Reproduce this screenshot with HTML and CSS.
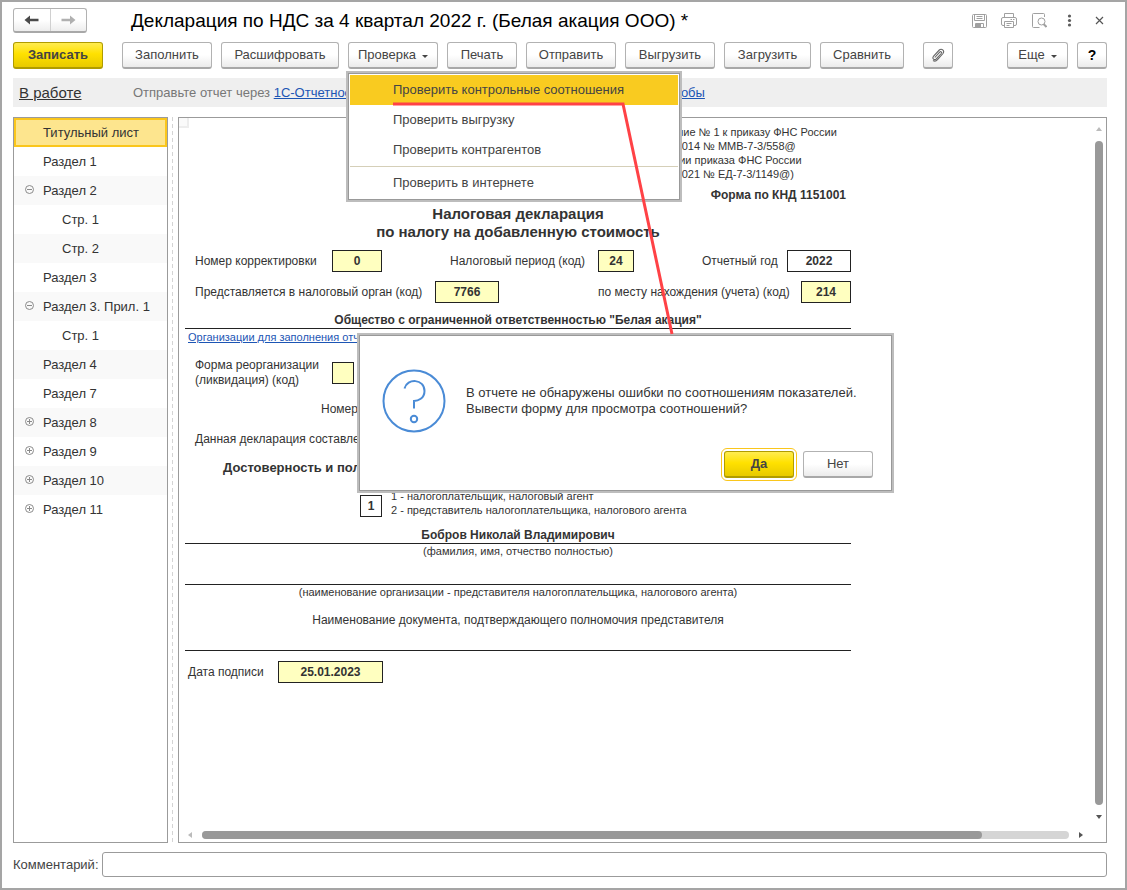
FILE: index.html
```html
<!DOCTYPE html>
<html lang="ru">
<head>
<meta charset="utf-8">
<title>Декларация по НДС</title>
<link rel="stylesheet" href="styles.css">
</head>
<body>
<div class="window">
  <header class="titlebar">
    <div class="history">
      <button class="history-btn" aria-label="Назад"><svg width="16" height="12" viewBox="0 0 16 12"><path d="M0.500 6L6 1.500V4.800H14.500V7.200H6V10.500Z" fill="#4a4a4a"/></svg></button>
      <button class="history-btn" aria-label="Вперед"><svg width="16" height="12" viewBox="0 0 16 12"><path d="M15.500 6L10 1.500V4.800H1.500V7.200H10V10.500Z" fill="#b0b0b0"/></svg></button>
    </div>
    <h1 class="title">Декларация по НДС за 4 квартал 2022 г. (Белая акация ООО) *</h1>
    <div class="window-tools">
      <button class="tool" aria-label="Сохранить"><svg width="16" height="16" viewBox="0 0 16 16" fill="none" stroke="#a0a0a0"><rect x="1.500" y="1.500" width="14" height="13" rx="1"/><path d="M3.500 1.500V7.500H13.500V1.500M5.500 3.500H11.500M5.500 5.500H11.500M4.500 14.500V10.500H12.500V14.500"/><path d="M5 11h5v3h-5z" fill="#a0a0a0" stroke="none"/></svg></button>
      <button class="tool" aria-label="Печать"><svg width="16" height="16" viewBox="0 0 16 16" fill="none" stroke="#a0a0a0"><path d="M3.500 4.500V0.500H12.500V4.500M3.500 12.500H2Q0.500 12.500 0.500 11V6Q0.500 4.500 2 4.500H14Q15.500 4.500 15.500 6V11Q15.500 12.500 14 12.500H12.500M3.500 8.500H12.500V14.500H3.500ZM5.500 10.500H10.500M5.500 12.500H8.500M9.500 6.500H11M12 6.500H13.500"/></svg></button>
      <button class="tool" aria-label="Предварительный просмотр"><svg width="16" height="16" viewBox="0 0 16 16" fill="none" stroke="#a0a0a0"><path d="M13.500 4V1.500Q13.500 0.500 12.500 0.500H2.500Q1.500 0.500 1.500 1.500V13.500Q1.500 14.500 2.500 14.500H8.500"/><circle cx="10.500" cy="8.500" r="3.500"/><path d="M12.500 11L15.500 14" stroke-width="2"/></svg></button>
      <button class="tool" aria-label="Меню"><svg width="16" height="16" viewBox="0 0 16 16" fill="#5c5c5c"><circle cx="8.500" cy="3" r="1.600"/><circle cx="8.500" cy="7.500" r="1.600"/><circle cx="8.500" cy="12" r="1.600"/></svg></button>
      <button class="tool" aria-label="Закрыть"><svg width="16" height="16" viewBox="0 0 16 16" stroke="#555" stroke-width="1.200"><path d="M5 4L12 11M12 4L5 11"/></svg></button>
    </div>
  </header>

  <div class="toolbar">
    <button class="btn btn-primary w-90 gap-after">Записать</button>
    <button class="btn w-90">Заполнить</button>
    <button class="btn w-118">Расшифровать</button>
    <div class="dropdown">
      <button class="btn w-90" aria-haspopup="menu" aria-expanded="true">Проверка<span class="caret"></span></button>
      <div class="menu" role="menu">
        <button class="menu-item active" role="menuitem">Проверить контрольные соотношения</button>
        <button class="menu-item" role="menuitem">Проверить выгрузку</button>
        <button class="menu-item" role="menuitem">Проверить контрагентов</button>
        <div class="menu-line"></div>
        <button class="menu-item" role="menuitem">Проверить в интернете</button>
      </div>
    </div>
    <button class="btn w-70">Печать</button>
    <button class="btn w-90">Отправить</button>
    <button class="btn w-90">Выгрузить</button>
    <button class="btn w-87">Загрузить</button>
    <button class="btn w-84 gap-after">Сравнить</button>
    <button class="btn w-30" aria-label="Прикрепить файл"><svg width="16" height="16" viewBox="0 0 16 16" fill="none" stroke="#666" stroke-width="1.100"><path d="M4.800 10.500L9.700 5.200C10.900 4 12.200 5.300 11.200 6.500L6.300 11.900C4.300 13.800 1.700 11.500 3.400 9.300L9.300 3C11.600 1 15 3.700 13 6.500L7.500 12.700C6.200 14.200 4.400 14.500 3 13.500"/></svg></button>
    <div class="spacer"></div>
    <button class="btn w-61">Еще<span class="caret"></span></button>
    <button class="btn btn-help w-30">?</button>
  </div>

  <div class="status">
    <a class="state" href="#">В работе</a>
    <p class="hint">Отправьте отчет через <a href="#">1С-Отчетность</a></p>
    <a class="more" href="#">особы</a>
  </div>

  <main class="main">
    <nav class="sections">
      <ul class="tree">
        <li class="node selected">Титульный лист</li>
        <li class="node">Раздел 1</li>
        <li class="node"><svg class="toggle" viewBox="0 0 9 9"><circle cx="4.500" cy="4.500" r="4"/><path d="M2 4.500H7"/></svg>Раздел 2</li>
        <li class="node child">Стр. 1</li>
        <li class="node child">Стр. 2</li>
        <li class="node">Раздел 3</li>
        <li class="node"><svg class="toggle" viewBox="0 0 9 9"><circle cx="4.500" cy="4.500" r="4"/><path d="M2 4.500H7"/></svg>Раздел 3. Прил. 1</li>
        <li class="node child">Стр. 1</li>
        <li class="node">Раздел 4</li>
        <li class="node">Раздел 7</li>
        <li class="node"><svg class="toggle" viewBox="0 0 9 9"><circle cx="4.500" cy="4.500" r="4"/><path d="M2 4.500H7M4.500 2V7"/></svg>Раздел 8</li>
        <li class="node"><svg class="toggle" viewBox="0 0 9 9"><circle cx="4.500" cy="4.500" r="4"/><path d="M2 4.500H7M4.500 2V7"/></svg>Раздел 9</li>
        <li class="node"><svg class="toggle" viewBox="0 0 9 9"><circle cx="4.500" cy="4.500" r="4"/><path d="M2 4.500H7M4.500 2V7"/></svg>Раздел 10</li>
        <li class="node"><svg class="toggle" viewBox="0 0 9 9"><circle cx="4.500" cy="4.500" r="4"/><path d="M2 4.500H7M4.500 2V7"/></svg>Раздел 11</li>
      </ul>
    </nav>
    <div class="splitter"></div>
    <section class="document">
      <div class="sheet-area">
        <div class="corner"></div>
        <form class="sheet">
          <p class="order">Приложение № 1 к приказу ФНС России<br>от 29.10.2014 № ММВ-7-3/558@<br>(в редакции приказа ФНС России<br>от 26.03.2021 № ЕД-7-3/1149@)</p>
          <p class="knd">Форма по КНД 1151001</p>
          <h2 class="heading">Налоговая декларация<br>по налогу на добавленную стоимость</h2>
          <div class="fields">
            <div class="field"><label class="l-137" for="corr">Номер корректировки</label><input class="cell c-50" id="corr" value="0"></div>
            <div class="field"><label class="l-148" for="period">Налоговый период (код)</label><input class="cell c-36" id="period" value="24"></div>
            <div class="field"><label class="l-85" for="year">Отчетный год</label><input class="cell plain c-64" id="year" value="2022"></div>
          </div>
          <div class="fields">
            <div class="field"><label class="l-240" for="organ">Представляется в налоговый орган (код)</label><input class="cell c-64" id="organ" value="7766"></div>
            <div class="field"><label class="l-203" for="place">по месту нахождения (учета) (код)</label><input class="cell c-50" id="place" value="214"></div>
          </div>
          <p class="line-value company">Общество с ограниченной ответственностью "Белая акация"</p>
          <a class="org-link" href="#">Организации для заполнения отчетов</a>
          <div class="field reorg"><label class="l-137" for="reorg">Форма реорганизации<br>(ликвидация) (код)</label><input class="cell c-22" id="reorg"></div>
          <p class="phone">Номер</p>
          <p class="pages">Данная декларация составлена</p>
          <h3 class="confirm">Достоверность и полноту</h3>
          <div class="signer"><input class="cell plain c-22" aria-label="Признак подписанта" value="1"><p class="note">1 - налогоплательщик, налоговый агент<br>2 - представитель налогоплательщика, налогового агента</p></div>
          <p class="line-value person">Бобров Николай Владимирович</p>
          <p class="caption">(фамилия, имя, отчество полностью)</p>
          <div class="blank"></div>
          <p class="caption">(наименование организации - представителя налогоплательщика, налогового агента)</p>
          <p class="doc-name">Наименование документа, подтверждающего полномочия представителя</p>
          <div class="blank"></div>
          <div class="field sign-date"><label class="l-90" for="date">Дата подписи</label><input class="cell c-105" id="date" value="25.01.2023"></div>
        </form>
      </div>
      <div class="vscroll"><span class="arrow up"></span><span class="thumb"></span><span class="arrow down"></span></div>
      <div class="hscroll"><span class="arrow left"></span><span class="track"><span class="thumb"></span></span><span class="arrow right"></span></div>
    </section>
  </main>

  <div class="comment">
    <label for="comment">Комментарий:</label>
    <input id="comment" type="text">
  </div>

  <div class="dialog" role="dialog">
    <div class="message">
      <svg class="question" viewBox="0 0 64 64" fill="none" stroke="#4a8bd6" stroke-width="2"><circle cx="32" cy="32" r="30.500"/><path d="M22.500 19.500C25 9 42.500 9.500 42.500 22C42.500 29.500 36 32 32 32V39.500"/><circle cx="32" cy="50" r="3.200"/></svg>
      <p>В отчете не обнаружены ошибки по соотношениям показателей.<br>Вывести форму для просмотра соотношений?</p>
    </div>
    <div class="actions">
      <button class="btn btn-primary focused w-70">Да</button>
      <button class="btn w-70">Нет</button>
    </div>
  </div>
  <svg class="pointer" viewBox="0 0 282 234" fill="none" stroke="#ff4246" stroke-width="3"><path d="M0 2H230L279 232"/></svg>
</div>
</body>
</html>
```

FILE: styles.css
```css
* { box-sizing: border-box; }

body {
  margin: 0;
  font: 13px/16px "Liberation Sans", Arial, sans-serif;
  color: #333;
  background: #fff;
}

h1, h2, h3, p, ul { margin: 0; padding: 0; }
button, input { font: inherit; color: inherit; }
a { color: #1c55b4; }

.window {
  position: relative;
  display: flex;
  flex-direction: column;
  min-height: 100vh;
  border: 2px solid #a5a5a5;
  padding: 6px 18px 11px 11px;
}

/* title bar */
.titlebar { display: flex; align-items: center; height: 25px; }
.history {
  display: flex;
  width: 74px;
  height: 25px;
  border: 1px solid #b2b2b2;
  border-bottom: 2px solid #a8a8a8;
  border-radius: 3px;
  background: linear-gradient(#fff 50%, #ededed);
}
.history-btn {
  display: flex;
  align-items: center;
  justify-content: center;
  flex: 1;
  padding: 0;
  border: 0;
  background: none;
}
.history-btn + .history-btn { border-left: 1px solid #d0d0d0; }
.title { margin-left: 44px; font-size: 19px; line-height: 24px; font-weight: 400; color: #000; white-space: nowrap; }
.window-tools { display: flex; gap: 14px; margin-left: auto; }
.tool { display: flex; width: 16px; height: 16px; padding: 0; border: 0; background: none; }

/* toolbar */
.toolbar { display: flex; gap: 9px; height: 27px; margin-top: 9px; }
.btn {
  display: flex;
  align-items: center;
  justify-content: center;
  height: 27px;
  padding: 0;
  border: 1px solid #b2b2b2;
  border-bottom: 2px solid #a8a8a8;
  border-radius: 3px;
  background: linear-gradient(#fff 50%, #ebebeb);
  color: #444;
  white-space: nowrap;
}
.btn-primary {
  border-color: #b09c00;
  background: linear-gradient(#ffec50, #ffe100 45%, #e8ca00);
  font-weight: 700;
}
.btn-help { color: #000; font-size: 14px; font-weight: 700; }
.gap-after { margin-right: 10px; }
.spacer { flex: 1; }
.w-30 { width: 30px; }
.w-61 { width: 61px; }
.w-70 { width: 70px; }
.w-84 { width: 84px; }
.w-87 { width: 87px; }
.w-90 { width: 90px; }
.w-118 { width: 118px; }
.caret {
  margin: 3px 0 0 6px;
  border: 3px solid transparent;
  border-top-color: #444;
  border-bottom: 0;
}

.dropdown { position: relative; }
.menu {
  position: absolute;
  z-index: 2;
  top: 29px;
  left: -2px;
  width: 336px;
  padding: 2px;
  border: 2px solid #bdbdbd;
  box-shadow: inset 0 0 0 1px #999;
  background: #fff;
}
.menu-item {
  display: block;
  width: 100%;
  height: 30px;
  padding: 0 0 0 43px;
  border: 0;
  background: none;
  color: #444;
  text-align: left;
}
.menu-item.active { background: #f9cb20; }
.menu-line { height: 1px; margin: 1px 0; background: #d5cfb8; }

/* status band */
.status { display: flex; align-items: center; height: 29px; margin-top: 9px; padding-left: 6px; background: #efefef; }
.state { color: #333; font-size: 15px; line-height: 18px; width: 114px; }
.hint { width: 534px; color: #777; white-space: nowrap; }

/* main */
.main { display: flex; flex: 1; margin-top: 10px; }
.sections { width: 155px; border: 1px solid #9b9b9b; }
.tree { list-style: none; }
.node {
  display: flex;
  align-items: center;
  height: 29px;
  padding-left: 29px;
  white-space: nowrap;
}
.node:nth-child(odd) { background: #f9f9f9; }
.node.selected { padding-left: 27px; border: 2px solid #fac61c; background: #fde58e; }
.node.child { padding-left: 48px; }
.toggle { width: 9px; height: 9px; margin: 0 9px 2px -18px; fill: none; stroke: #8a8a8a; }
.splitter {
  width: 1px;
  margin: 0 5px 0 4px;
  background: repeating-linear-gradient(#d4d4d4 0 4px, transparent 4px 7px);
}
.document {
  display: grid;
  flex: 1;
  grid-template-columns: 1fr 15px;
  grid-template-rows: 1fr 15px;
  border: 1px solid #9b9b9b;
}
.sheet-area { display: flex; align-items: flex-start; }
.corner { width: 10px; height: 10px; margin-right: -4px; border: solid #ededed; border-width: 0 2px 2px 0; background: #fafafa; }
.sheet { width: 666px; padding-top: 7px; font-size: 12px; line-height: 15px; }
.order { margin-left: 446px; font-size: 11px; line-height: 14px; white-space: nowrap; }
.knd { margin-top: 7px; padding-right: 5px; font-weight: 700; text-align: right; }
.heading { margin-top: 2px; font-size: 15px; line-height: 18px; text-align: center; }
.fields { display: flex; justify-content: space-between; margin-top: 9px; padding-left: 10px; }
.field { display: flex; align-items: center; white-space: nowrap; }
.cell {
  height: 22px;
  padding: 0;
  border: 1px solid #222;
  border-radius: 0;
  background: #ffffc0;
  font-weight: 700;
  text-align: center;
}
.cell.plain { background: #fff; }
.c-22 { width: 22px; }
.c-36 { width: 36px; }
.c-50 { width: 50px; }
.c-64 { width: 64px; }
.c-105 { width: 105px; }
.l-85 { width: 85px; }
.l-90 { width: 90px; }
.l-137 { width: 137px; }
.l-148 { width: 148px; }
.l-203 { width: 203px; }
.l-240 { width: 240px; }
.line-value { border-bottom: 1px solid #222; font-weight: 700; text-align: center; }
.company { margin-top: 10px; }
.org-link { display: block; margin: 1px 0 0 3px; font-size: 11px; line-height: 14px; }
.reorg { margin-top: 14px; padding-left: 10px; }
.phone { margin: 14px 0 0 136px; }
.pages { margin: 15px 0 0 10px; }
.confirm { margin: 13px 0 0 38px; font-size: 13px; line-height: 16px; }
.signer { display: flex; margin: 13px 0 0 175px; align-items: flex-end; gap: 9px; }
.note { font-size: 11px; line-height: 14px; }
.person { margin-top: 11px; }
.caption { font-size: 11px; line-height: 14px; text-align: center; }
.blank { height: 27px; border-bottom: 1px solid #222; }
.doc-name { margin-top: 14px; text-align: center; }
.doc-name + .blank { height: 23px; }
.sign-date { margin: 10px 0 0 3px; }
.heading + .fields { margin-bottom: 9px; }

/* scroll bars */
.vscroll { display: flex; flex-direction: column; align-items: center; gap: 10px; padding: 9px 0 8px; }
.vscroll .thumb { flex: 1; width: 8px; border-radius: 4px; background: #999; }
.hscroll { display: flex; align-items: center; gap: 10px; padding: 0 8px 0 9px; }
.track { flex: 1; height: 8px; border-radius: 4px; background: #d5d5d5; }
.track .thumb { display: block; width: 90%; height: 8px; border-radius: 4px; background: #999; }
.arrow { border: 3px solid transparent; }
.arrow.up { border-top: 0; border-bottom: 4px solid #bbb; }
.arrow.down { border-bottom: 0; border-top: 4px solid #555; }
.arrow.left { border-left: 0; border-right: 4px solid #bbb; }
.arrow.right { border-right: 0; border-left: 4px solid #555; }

/* comment */
.comment { display: flex; align-items: center; gap: 3px; margin-top: 9px; color: #444; }
.comment input { flex: 1; height: 25px; padding: 0 6px; border: 1px solid #9b9b9b; border-radius: 3px; }

/* question dialog and the line that leads to it */
.dialog {
  position: absolute;
  top: 331px;
  left: 355px;
  width: 537px;
  padding: 34px 19px 13px 23px;
  border: 2px solid #bdbdbd;
  box-shadow: inset 0 0 0 1px #999;
  background: #fff;
}
.message { display: flex; align-items: center; gap: 20px; }
.question { width: 64px; height: 64px; flex: none; }
.actions { display: flex; justify-content: flex-end; gap: 9px; margin-top: 18px; }
.focused { outline: 1px solid #fac61c; outline-offset: 2px; }
.pointer { position: absolute; z-index: 3; top: 100px; left: 391px; width: 282px; height: 234px; pointer-events: none; }
```
